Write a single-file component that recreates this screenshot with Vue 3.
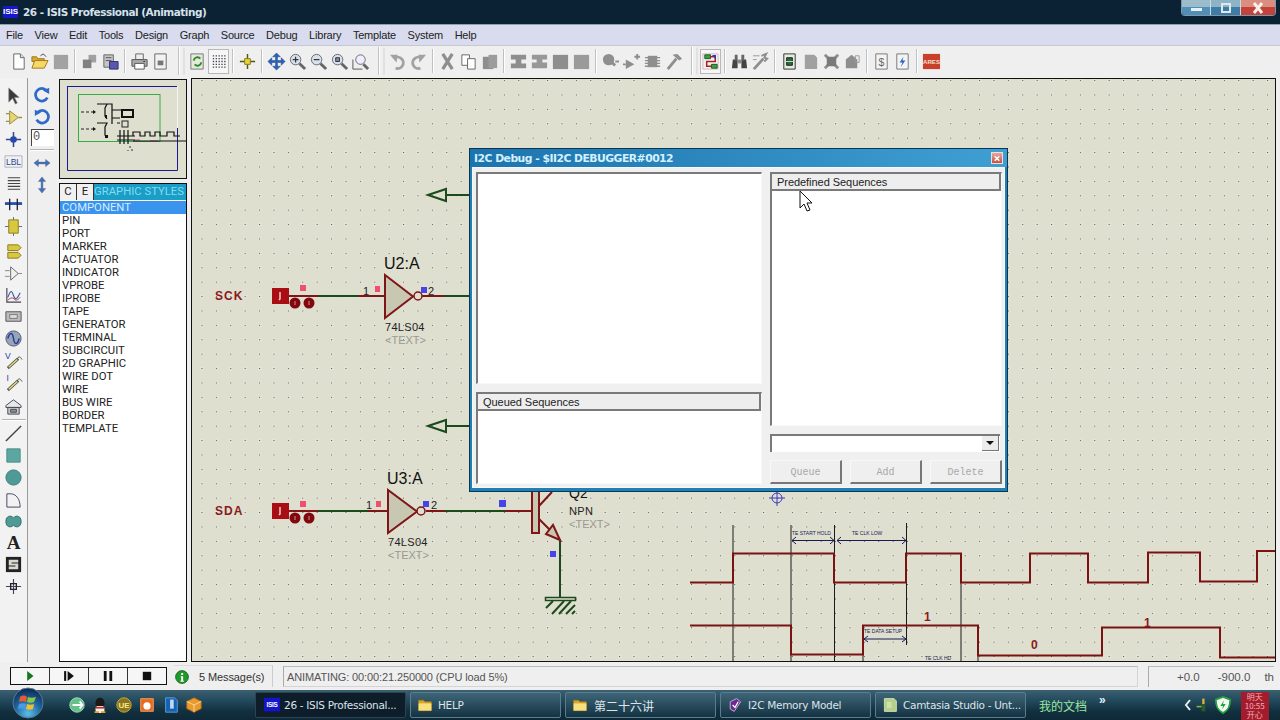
<script setup>
import { h } from 'vue'

const G = '#8e8e8e'
const circle = (cx, cy, r) => `M${cx - r} ${cy}a${r} ${r} 0 1 0 ${2 * r} 0a${r} ${r} 0 1 0 ${-2 * r} 0`
let dots = ''
for (let y = 4; y < 18; y += 3) for (let x = 4; x < 18; x += 3) dots += `M${x} ${y}h1.4`

const lens = (extra) => [
  ['M12 12l6 6', 'none', '#666', 3],
  [circle(8, 8, 5.5), '#d8e0e8', '#667'],
  ...extra
]

const icons = {
  new: [['M5 2h7l4 4v12H5z', '#fff', '#666'], ['M12 2v4h4', '#ddd', '#666']],
  open: [['M11 4l3-2 3 3', 'none', '#446'], ['M2 5h5l1 2h7v3H2z', '#d8a828', '#a07818'], ['M2 17l3-8h14l-4 8z', '#f6d868', '#a07818']],
  save: [['M3 3h15v15H3z', '#a2a2a2']],
  imp: [['M9 3h8v8H9z', '#a0a0a0'], ['M3 8h9v9H3z', '#808080']],
  exp: [['M3 3h10v13H3z', '#c4c4c4', '#666'], ['M5 6h6M5 9h6', 'none', '#555'], ['M9 10h9v8H9z', '#5858b0', '#336']],
  print: [['M6 2h8v6H6z', '#eee', '#666'], ['M2 8h16v7H2z', '#aaa', '#555'], ['M5 12h10v6H5z', '#fff', '#555'], ['M14 10h2', 'none', '#333']],
  prev: [['M4 2h12v16H4z', '#f2f2f2', '#666'], ['M7 9h6v5H7z', '#777']],
  sync: [['M3 2h13v16H3z', '#e4ead8', '#778'], ['M6 9a4 4 0 0 1 7-2', 'none', '#2a8a2a', 2], ['M14 11a4 4 0 0 1-7 2', 'none', '#2a8a2a', 2]],
  grid: [[dots, 'none', '#445', 1.4]],
  origin: [['M10 2v16M2 10h16', 'none', '#4a5a10', 1.5], ['M7 7h6v6H7z', '#e8d040', '#8a7a10']],
  pan: [['M10 1l4 4h-3v4h4V6l4 4-4 4v-3h-4v4h3l-4 4-4-4h3v-4H5v3l-4-4 4-4v3h4V5H6z', '#2a62c0', '#1a3a80', 0.5]],
  zin: lens([['M5 8h6M8 5v6', 'none', '#334', 1.3]]),
  zout: lens([['M5 8h6', 'none', '#334', 1.3]]),
  zall: lens([['M6 6h4v4H6z', '#889', '#334']]),
  zarea: [['M2 8v10h10', 'none', '#555', 1], ['M13 13l5 5', 'none', '#666', 3], [circle(10, 8, 5), '#eef', '#667']],
  undo: [['M6 7a6 6 0 1 1 2 10', 'none', '#a2a2a2', 3], ['M2 3l8 0-1 8z', '#a2a2a2']],
  redo: [['M14 7a6 6 0 1 0-2 10', 'none', '#a2a2a2', 3], ['M18 3l-8 0 1 8z', '#a2a2a2']],
  cut: [['M5 2l10 16M15 2L5 18', 'none', G, 3.4]],
  copy: [['M3 3h8v11H3z', '#fff', '#666'], ['M9 7h8v11H9z', '#fff', '#666']],
  paste: [['M3 5h11v13H3z', G], ['M9 3h9v14H9z', '#9c9c9c']],
  bcopy: [['M2 3h16v5h-5v4h5v5H2v-5h5V8H2z', G]],
  bmove: [['M2 3h16v5h-5v3h5v6H2v-6h5V8H2z', '#989898']],
  brot: [['M2 3h16v15H2z', G]],
  bdel: [['M2 3h16v15H2z', '#9a9a9a']],
  pick: [['M11 11l4 3', 'none', G, 3], [circle(8, 8, 6), G], ['M15 10h4', 'none', G, 2]],
  mk: [['M4 8l9 5-9 5z', G], ['M13 5h6M16 2v6M1 13h3', 'none', G, 2]],
  chip: [['M5 4h10v12H5z', G], ['M2 6h16M2 9h16M2 12h16M2 15h16', 'none', G, 1.4]],
  hammer: [['M4 18L13 7', 'none', G, 3], ['M9 3l5-1 5 5-3 2z', G]],
  dsn: [['M2 2h16v16H2z', '#f0f0f0', '#d8b8b8'], ['M4 3h6v4H4zM11 13h6v4h-6z', '#38a048', '#1a5a20'], ['M10 5h5v5H6v5h5', 'none', '#b02020', 1.6], ['M12 4h3v3', 'none', '#2040c0', 1.6]],
  find: [['M3 8h5v9H2zM12 8h5l1 9h-6z', '#444'], ['M5 3h3v6H5zM12 3h3v6h-3z', '#666'], ['M8 8h4v4H8z', '#888']],
  wrench: [['M3 18L13 7', 'none', G, 3], ['M11 4l5-2-2 4 3 1-3 3', 'none', G, 2], ['M2 4h7M2 8h4', 'none', '#999', 1]],
  net: [['M4 2h12v16H4z', '#e8ecd8', '#333'], ['M7 6h6v8H7z', '#2a6a40', '#123'], ['M5 10h10', 'none', '#d0e0c0', 1]],
  bom: [['M4 3h10l3 3v12H4z', '#a0a0a0']],
  rule: [['M3 3l14 14M17 3L3 17', 'none', G, 3], ['M5 5h10v10H5z', '#7a7a7a']],
  tree: [['M3 8l6-5 6 5v9H3z', G], ['M13 4h4v7h-4z', 'none', '#999', 1]],
  dollar: [['M4 2h12v16H4z', '#f4f4f4', '#777'], { t: '$', x: 10, y: 15, s: 11, f: '#666' }],
  flash: [['M4 2h12v16H4z', '#f4f4f4', '#777'], ['M11 5l-4 6h3l-2 5 5-7h-3z', '#2a60c8']],
  ares: [['M1 2h18v16H1z', '#c8402c'], { t: 'ARES', x: 10, y: 13, s: 6.4, f: '#f4e0d0', w: 'bold' }],

  arrow: [['M5 2v15l4-4 3 6 2-1-3-6h5z', '#3a3a3a', '#888', 0.6]],
  comp: [['M2 6h4M2 14h4M15 10h4', 'none', '#a09040', 1.4], ['M6 3v14l9-7z', '#e6d670', '#998840']],
  junc: [['M10 2v16M2 10h16', 'none', '#334a8a', 1.6], [circle(10, 10, 3.5), '#2a4aaa']],
  lbl: [['M1 4h18v12H1z', '#f0f0f0', '#88a', 0.6], { t: 'LBL', x: 10, y: 13.5, s: 9, f: '#264a90' }],
  script: [['M4 4h13M4 7h13M4 10h13M4 13h13M4 16h13', 'none', '#444', 1.2]],
  bus: [['M1 9h18', 'none', '#2a52b0', 3], ['M6 4v12M14 4v12', 'none', '#223', 1.4]],
  sub: [['M1 10h18M10 0v4M10 16v4', 'none', '#666', 1], ['M5 3h10v14H5z', '#d8c840', '#8a7a20']],
  term: [['M4 3h11l3 3-3 3H4z', '#d8c840', '#8a7a20'], ['M4 11h11l3 3-3 3H4z', '#d8c840', '#8a7a20']],
  pin: [['M7 3v14l8-7z', '#f0f0f0', '#666'], ['M1 7h5M1 13h5M15 10h4', 'none', '#888', 1]],
  graph: [['M3 2v15h15', 'none', '#445', 1.2], ['M4 12c3-8 4-8 6-2s4 3 7-3', 'none', '#3a5aa0', 1.2], ['M4 15c3-3 5-3 7-1s4 0 6-2', 'none', '#b03030', 1]],
  tape: [['M2 5h16v10H2z', '#bcbcbc', '#555'], ['M6 8h8v4H6z', '#ddd', '#777']],
  gen: [[circle(10, 10, 8), '#9aa4b8', '#556'], ['M4 10c2-7 5-7 6 0s4 7 6 0', 'none', '#2240a0', 1.6]],
  vprobe: [['M4 18L15 8', 'none', '#555', 3], ['M5 17L14 9', 'none', '#e6e070', 1.4], ['M14 8c2-3 3-2 5 1', 'none', '#444', 1], { t: 'V', x: 4, y: 8, s: 9, f: '#2a3a9a' }],
  iprobe: [['M4 18L15 8', 'none', '#555', 3], ['M5 17L14 9', 'none', '#e6e070', 1.4], ['M14 8c2-3 3-2 5 1', 'none', '#444', 1], { t: 'I', x: 4, y: 8, s: 9, f: '#2a3a9a' }],
  inst: [['M2 9l8-6 8 6v2H2z', '#e8e8e8', '#445'], ['M4 11h12v7H4z', '#c8c8c8', '#445'], ['M7 13h6v3H7z', '#8a9a8a', '#445']],
  line: [['M2 18L18 2', 'none', '#444', 1.5]],
  rect: [['M3 3h14v14H3z', '#5ba8a2', '#4a8a88']],
  circ: [[circle(10, 10, 8), '#4f9a94', '#3a7a78']],
  arc: [['M3 18V4h4c6 0 10 6 10 14z', 'none', '#446', 1]],
  blob: [['M2 10c0-6 5-7 8-4 3-3 8-2 8 4s-5 7-8 4c-3 3-8 2-8-4z', '#4f9a94', '#2a6a68']],
  atext: [{ t: 'A', x: 10, y: 17, s: 20, f: '#222', w: 'bold', ff: 'Liberation Serif' }],
  sym: [['M2 2h16v16H2z', '#222'], ['M5 5h10v3H8v1h7v6H5v-3h7v-1H5z', '#d8d8d0']],
  mark: [['M10 2v16M2 10h16', 'none', '#445', 1.2], ['M7 7h6v6H7z', 'none', '#223', 1.4]],

  cw: [['M15 5a7 7 0 1 0 1 8', 'none', '#2f6ac8', 3], ['M11 5l7-3v7z', '#2f6ac8']],
  ccw: [['M5 5a7 7 0 1 1-1 8', 'none', '#2f6ac8', 3], ['M9 5L2 2v7z', '#2f6ac8']],
  fliph: [['M1 10l5-4v3h8V6l5 4-5 4v-3H6v3z', '#3a70c8', '#666', 0.5]],
  flipv: [['M10 1l4 5h-3v8h3l-4 5-4-5h3V6H6z', '#3a70c8', '#666', 0.5]],

  info: [[circle(10, 10, 8), '#1f9a2a', '#0c5a14'], ['M9 5h2.4v2.4H9zM8.4 9h3v5.6h1V16H8v-1.4h1V10.4h-.6z', '#fff']],
  play: [['M6 3l9 7-9 7z', '#14761e']],
  step: [['M3 3h3v14H3z', '#111'], ['M8 3l9 7-9 7z', '#111']],
  pause: [['M4 3h4v14H4zM12 3h4v14h-4z', '#111']],
  stop: [['M4 4h12v12H4z', '#111']],

  ie: [[circle(10, 10, 8), '#66c08a', '#a8e0c0'], ['M5 10h10M13 6l3 4-3 4', 'none', '#fff', 2]],
  qq: [['M5 15c0-3 2-5 5-5s5 2 5 5-2 4-5 4-5-1-5-4z', '#f4f4f4'], ['M5 8c0-8 10-8 10 0 0 2-1 3-1 3H6s-1-1-1-3z', '#1a1a1a'], ['M5 12h10v2H5z', '#d02a20'], ['M4 18h5M11 18h5', 'none', '#e8a020', 2]],
  ue: [[circle(10, 10, 8), '#8a7420', '#c8b040'], { t: 'UE', x: 10, y: 13.5, s: 9, f: '#f8e880', w: 'bold' }],
  fox: [['M3 3h14v14H3z', '#e86a20', '#f8a060'], [circle(10, 11, 4), '#fff']],
  box: [['M4 2h10l3 3v13H4z', '#1a60b0', '#5aa0e0'], ['M9 4h4v10H9z', '#bcdcf4']],
  cube: [['M10 2l8 4v8l-8 4-8-4V6z', '#e89a30', '#b06a10'], ['M2 6l8 4 8-4M10 10v8', 'none', '#fbe0a0', 1]],
  isis: [['M0 1h20v17H0z', '#1414c8'], { t: 'ISIS', x: 10, y: 13, s: 8, f: '#fff', w: 'bold' }],
  folder: [['M2 4h6l2 2h8v11H2z', '#d8a828', '#a07818'], ['M2 8h16v9H2z', '#f8e080']],
  book: [['M4 6l8-4 5 4-8 12-5-3z', '#6a2a90', '#d8c8e0'], ['M7 10l3 3 4-7', 'none', '#fff', 1.5]],
  cam: [['M3 2h12l3 3v13H3z', '#b4d088', '#dce8c0'], ['M6 6h6v8H6z', '#d0e0a8']],
  plug: [['M9 2h3v7H9z', '#d8b040'], ['M8 9h5v9H8z', '#2a5a2a'], ['M2 12h6', 'none', '#88b040', 2]],
  shield: [['M10 1l8 3c0 8-2 12-8 15C4 16 2 12 2 4z', '#f0f8f0', '#28a040', 2], ['M11 5l-4 6h3l-1 4 4-6h-3z', '#20a040']]
}

const Icon = (props) =>
  h('svg', { width: props.size || 20, height: props.size || 20, viewBox: '0 0 20 20', style: 'display:block' },
    icons[props.name].map((p) =>
      p.t
        ? h('text', { x: p.x, y: p.y, 'font-size': p.s, fill: p.f, 'font-family': p.ff || 'Liberation Sans', 'font-weight': p.w || 'normal', 'text-anchor': 'middle' }, p.t)
        : h('path', { d: p[0], fill: p[1] || 'none', stroke: p[2] || 'none', 'stroke-width': p[3] || 1 })
    ))
Icon.props = ['name', 'size']

const menus = ['File', 'View', 'Edit', 'Tools', 'Design', 'Graph', 'Source', 'Debug', 'Library', 'Template', 'System', 'Help']

const toolGroups = [
  { icons: ['new', 'open', 'save'] },
  { icons: ['imp', 'exp'] },
  { icons: ['print', 'prev'] },
  { wide: true, icons: ['sync', 'grid'] },
  { icons: ['origin'] },
  { icons: ['pan', 'zin', 'zout', 'zall', 'zarea'] },
  { wide: true, icons: ['undo', 'redo'] },
  { icons: ['cut', 'copy', 'paste'] },
  { icons: ['bcopy', 'bmove', 'brot', 'bdel'] },
  { icons: ['pick', 'mk', 'chip', 'hammer'] },
  { wide: true, icons: ['dsn'] },
  { icons: ['find', 'wrench'] },
  { icons: ['net', 'bom', 'rule', 'tree'] },
  { icons: ['dollar', 'flash'] },
  { icons: ['ares'] }
]
const pressed = ['grid', 'dsn']

const modeA = ['arrow', 'comp', 'junc', 'lbl', 'script', 'bus', 'sub', 'term', 'pin', 'graph', 'tape', 'gen', 'vprobe', 'iprobe', 'inst']
const modeB = ['line', 'rect', 'circ', 'arc', 'blob', 'atext', 'sym', 'mark']

const styles = ['COMPONENT', 'PIN', 'PORT', 'MARKER', 'ACTUATOR', 'INDICATOR', 'VPROBE', 'IPROBE', 'TAPE', 'GENERATOR', 'TERMINAL', 'SUBCIRCUIT', '2D GRAPHIC', 'WIRE DOT', 'WIRE', 'BUS WIRE', 'BORDER', 'TEMPLATE']

const dialogButtons = ['Queue', 'Add', 'Delete']
const playButtons = ['play', 'step', 'pause', 'stop']
const quick = ['ie', 'qq', 'ue', 'fox', 'box', 'cube']
const tasks = [
  { icon: 'isis', label: '26 - ISIS Professional...', active: true },
  { icon: 'folder', label: 'HELP' },
  { icon: 'folder', label: '第二十六讲', cjk: true },
  { icon: 'book', label: 'I2C Memory Model' },
  { icon: 'cam', label: 'Camtasia Studio - Unt...' }
]

const upper = '690,582.5 733,582.5 733,553.5 834,553.5 834,582.5 906,582.5 906,553.5 961,553.5 961,582.5 1030,582.5 1030,553.5 1088,553.5 1088,582.5 1148,582.5 1148,552.5 1200,552.5 1200,581.5 1257,581.5 1257,551 1276,551'
const lower = '690,625.5 791,625.5 791,654.5 863,654.5 863,625.5 978,625.5 978,655.5 1102,655.5 1102,627.5 1220,627.5 1220,657.5 1276,657.5'
const verticals = [
  [733, 525, 662], [791, 525, 662], [834.5, 525, 662], [906.5, 523, 645],
  [961, 582, 662], [863, 654, 662], [978, 654, 662]
]
const generators = [
  { x: 272, y: 288, pink: 300, pinkY: 285 },
  { x: 272, y: 503, pink: 300, pinkY: 501 }
]
</script>

<template>
  <div class="screen">
    <header class="titlebar">
      <div class="app-ico">ISIS</div>
      <span class="title">26 - ISIS Professional (Animating)</span>
      <div class="caption">
        <span class="cap min"><i class="dash"></i></span>
        <span class="cap max"><i class="sq"></i></span>
        <span class="cap close">
          <svg width="14" height="12" viewBox="0 0 14 12"><path d="M3 1l8 10M11 1L3 11" stroke="#f4f0e8" stroke-width="3" fill="none" /></svg>
        </span>
      </div>
    </header>

    <nav class="menubar">
      <span v-for="m in menus" :key="m" class="menu">{{ m }}</span>
    </nav>

    <div class="toolbar">
      <template v-for="(g, i) in toolGroups" :key="i">
        <span v-if="i" class="sep" :class="{ wide: g.wide }"></span>
        <span v-for="n in g.icons" :key="n" class="tbtn" :class="{ on: pressed.includes(n) }">
          <Icon :name="n" :size="19" />
        </span>
      </template>
    </div>

    <main class="main">
      <aside class="modes">
        <span v-for="n in modeA" :key="n" class="mode"><Icon :name="n" :size="19" /></span>
        <span class="hr"></span>
        <span v-for="n in modeB" :key="n" class="mode"><Icon :name="n" :size="19" /></span>
      </aside>

      <aside class="rot">
        <span class="mode"><Icon name="cw" :size="18" /></span>
        <span class="mode"><Icon name="ccw" :size="18" /></span>
        <div class="angle">0</div>
        <span class="hr"></span>
        <span class="mode"><Icon name="fliph" :size="18" /></span>
        <span class="mode"><Icon name="flipv" :size="18" /></span>
      </aside>

      <section class="panel">
        <div class="overview">
          <svg width="126" height="98" viewBox="60 80 126 98">
            <path d="M67 86.500H177" stroke="#1a1a90" fill="none" />
            <path d="M67.500 86V170.500H177.500V128" stroke="#1a1a90" fill="none" />
            <path d="M177.500 86V128" stroke="#f4f4f0" fill="none" />
            <rect x="78.500" y="94.500" width="81.500" height="47" fill="none" stroke="#30b040" />
            <path d="M81 112h3m2 0h3m2 0h3M81 129h3m2 0h3m2 0h3" stroke="#222" fill="none" />
            <path d="M93 110l3 2-3 2zM93 127l3 2-3 2z" fill="#111" />
            <path d="M97 104h10l-2 4v8l2 3M97 123h10l-2 4v8l2 3M107 104h5v20M112 110h10M112 118h8M117 123h3" stroke="#111" stroke-width="1.200" fill="none" />
            <rect x="122" y="110" width="11" height="7" fill="none" stroke="#111" stroke-width="2" />
            <rect x="122" y="121" width="6" height="6" fill="none" stroke="#222" />
            <rect x="105" y="115" width="2" height="3" fill="#111" /><rect x="105" y="135" width="3" height="3" fill="#111" />
            <path d="M120 130v14M124 130v14M128 130v14M117 136h18M117 140h18" stroke="#111" fill="none" stroke-width="1.200" />
            <path d="M132 140h8M150 141h8" stroke="#d040a0" fill="none" />
            <path d="M133 136v-4h7v4h5v-4h5v4h5v-4h5v4h7v-4h7v4h6" stroke="#111" fill="none" stroke-width="1.200" />
            <path d="M133 141h53" stroke="#111" fill="none" stroke-width="1.200" />
            <path d="M130 146v2M132 149v2M128 150v1" stroke="#333" fill="none" />
          </svg>
        </div>
        <div class="tabs">
          <span class="tab">C</span><span class="tab">E</span>
          <span class="tab-title">GRAPHIC STYLES</span>
        </div>
        <ul class="stylelist">
          <li v-for="(s, i) in styles" :key="s" :class="{ sel: i === 0 }">{{ s }}</li>
        </ul>
      </section>

      <section class="canvas">
        <svg class="sheet" viewBox="192 79 1083 582" width="1083" height="582">
          <defs>
            <pattern id="dots" x="200.500" y="93.500" width="14.400" height="14.400" patternUnits="userSpaceOnUse">
              <rect width="3" height="3" x="0" y="0" fill="#e6e6da" />
              <rect x="1" y="1" width="1" height="1" fill="#4a4a44" />
            </pattern>
          </defs>
          <rect x="192" y="79" width="1083" height="582" fill="#dfdfd0" />
          <rect x="192" y="79" width="1083" height="582" fill="url(#dots)" />

          <!-- bus terminals behind the dialog -->
          <g fill="none" stroke="#1c4a1c" stroke-width="2">
            <path d="M428 195l18-6v12zM446 195h24M428 426l18-6v12zM446 426h24" />
          </g>

          <!-- SCK channel -->
          <text x="215" y="300" class="netname">SCK</text>
          <text x="215" y="515" class="netname">SDA</text>
          <g v-for="g in generators" :key="g.y">
            <rect :x="g.x" :y="g.y" width="17" height="16" fill="#a80e14" />
            <path :d="`M${g.x + 8} ${g.y + 4}v7l-1 1`" stroke="#f0d0d0" fill="none" stroke-width="1.500" />
            <circle :cx="g.x + 23" :cy="g.y + 15" r="5.500" fill="#80080e" />
            <circle :cx="g.x + 37" :cy="g.y + 15" r="5.500" fill="#80080e" />
            <path :d="`M${g.x + 23} ${g.y + 13}v4M${g.x + 37} ${g.y + 13}v4`" stroke="#d09090" />
            <rect :x="g.pink" :y="g.pinkY" width="6" height="6" fill="#f0506e" />
          </g>

          <path d="M289 296h29M358 296h27M422 296h22M289 511h29M368 511h20M426 511h19M505 511h27" stroke="#7e1618" stroke-width="2" fill="none" />
          <path d="M318 296h40M444 296h26M318 511h50M445 511h60M560 541v56" stroke="#1c4a1c" stroke-width="2" fill="none" />

          <!-- U2:A -->
          <path d="M385 275v43l28-21.500z" fill="#c8c8b2" stroke="#7e1618" stroke-width="2" />
          <circle cx="418" cy="296" r="4" fill="#dfdfd0" stroke="#7e1618" stroke-width="1.500" />
          <rect x="375" y="286" width="5" height="6" fill="#f0506e" />
          <rect x="421" y="287" width="6" height="6" fill="#4646e8" />
          <text x="363" y="295" class="pin">1</text>
          <text x="428" y="295" class="pin">2</text>
          <text x="384" y="269" class="ref">U2:A</text>
          <text x="385" y="331" class="val">74LS04</text>
          <text x="385" y="344" class="ghost">&lt;TEXT&gt;</text>

          <!-- U3:A -->
          <path d="M388 490v43l29-21.500z" fill="#c8c8b2" stroke="#7e1618" stroke-width="2" />
          <circle cx="421" cy="511" r="4" fill="#dfdfd0" stroke="#7e1618" stroke-width="1.500" />
          <rect x="376" y="501" width="5" height="6" fill="#f0506e" />
          <rect x="423" y="501" width="6" height="6" fill="#4646e8" />
          <text x="366" y="509" class="pin">1</text>
          <text x="431" y="509" class="pin">2</text>
          <text x="387" y="484" class="ref">U3:A</text>
          <text x="388" y="546" class="val">74LS04</text>
          <text x="388" y="559" class="ghost">&lt;TEXT&gt;</text>

          <!-- Q2 -->
          <rect x="499" y="500" width="7" height="7" fill="#4646e8" />
          <rect x="532" y="488" width="7" height="45" fill="#c8c8b2" stroke="#7e1618" stroke-width="2" />
          <path d="M539 506l13-14M539 519l21 21" stroke="#7e1618" stroke-width="2" fill="none" />
          <path d="M546 534l7-9 7 15z" fill="#c8c8b2" stroke="#7e1618" stroke-width="2" />
          <rect x="550" y="551" width="6" height="6" fill="#4646e8" />
          <text x="569" y="498" class="ref q">Q2</text>
          <text x="569" y="515" class="val">NPN</text>
          <text x="569" y="528" class="ghost">&lt;TEXT&gt;</text>

          <!-- ground -->
          <path d="M545.500 597.500h30v3h-30z" fill="#dfdfd0" stroke="#1c4a1c" stroke-width="1.500" />
          <path d="M546 608l7-7M552 614l12-13M559 614l12-13M566 614l9-9M572 614l3-3" stroke="#1c4a1c" stroke-width="2" fill="none" />

          <!-- probe marker -->
          <g fill="none" stroke="#3a3ab8">
            <circle cx="777" cy="498" r="5" />
            <path d="M777 490v16M769 498h16" />
          </g>

          <!-- timing diagram -->
          <g stroke="#1a1a1a" fill="none">
            <path v-for="v in verticals" :key="v[0]" :d="`M${v[0]} ${v[1]}V${v[2]}`" />
          </g>
          <polyline :points="upper" class="wave" />
          <polyline :points="lower" class="wave" />
          <g stroke="#1a1a50" fill="none">
            <path d="M792 540.500h42M796 537l-4 3.500 4 3.500M830 537l4 3.500-4 3.500" />
            <path d="M837 540.500h69M841 537l-4 3.500 4 3.500M902 537l4 3.500-4 3.500" />
            <path d="M864 639h42M868 636l-4 3 4 3M902 636l4 3-4 3" />
          </g>
          <text x="792" y="535" class="tiny">TE START HOLD</text>
          <text x="852" y="535" class="tiny">TE CLK LOW</text>
          <text x="864" y="633" class="tiny">TE DATA SETUP</text>
          <text x="925" y="660" class="tiny">TE CLK HD</text>
          <text x="924" y="621" class="bit">1</text>
          <text x="1031" y="649" class="bit">0</text>
          <text x="1144" y="627" class="bit">1</text>
        </svg>

        <div class="dialog">
          <div class="dlg-title">
            <span>I2C Debug - $II2C DEBUGGER#0012</span>
            <span class="dlg-close">
              <svg width="11" height="11" viewBox="0 0 11 11"><path d="M3 3l5 5M8 3L3 8" stroke="#fff" stroke-width="1.600" /></svg>
            </span>
          </div>
          <div class="dlg-body">
            <div class="col left">
              <div class="well log"></div>
              <div class="well queued"><div class="well-head">Queued Sequences</div></div>
            </div>
            <div class="col right">
              <div class="well predefined"><div class="well-head">Predefined Sequences</div></div>
              <div class="combo">
                <span class="combo-btn"><i></i></span>
              </div>
              <div class="btnrow">
                <button v-for="b in dialogButtons" :key="b" class="dbtn" disabled>{{ b }}</button>
              </div>
            </div>
          </div>
          <svg class="cursor" width="14" height="24" viewBox="0 0 14 24">
            <path d="M1 1v17l4-4 3 7 3-1-3-7h5z" fill="#fff" stroke="#111" />
          </svg>
        </div>
      </section>
    </main>

    <footer class="status">
      <div class="player">
        <span v-for="p in playButtons" :key="p" class="pbtn"><Icon :name="p" :size="14" /></span>
      </div>
      <div class="messages"><Icon name="info" :size="16" /><span>5 Message(s)</span></div>
      <div class="state">ANIMATING: 00:00:21.250000 (CPU load 5%)</div>
      <div class="coords">
        <span class="cx">+0.0</span><span class="cy">-900.0</span><span class="cu">th</span>
      </div>
    </footer>

    <div class="taskbar">
      <svg class="orb" width="32" height="32" viewBox="0 0 32 32">
        <defs>
          <radialGradient id="orbfill" cx="50%" cy="85%" r="80%">
            <stop offset="0" stop-color="#5ac0e8" />
            <stop offset="0.6" stop-color="#1c5e98" />
            <stop offset="1" stop-color="#0c2e58" />
          </radialGradient>
        </defs>
        <circle cx="16" cy="16" r="15" fill="url(#orbfill)" stroke="#5a7a90" />
        <path d="M8 10c2-2 5-2 7 0l-1 5c-2-1-5-1-7 0z" fill="#e85a30" />
        <path d="M16 10c2 1 5 1 8 0l-2 5c-2 1-5 1-7 0z" fill="#8ac840" />
        <path d="M7 17c2-1 5-1 7 0l-1 5c-2-1-5-1-7 0z" fill="#4a9ae8" />
        <path d="M15 17c2 1 5 1 7 0l-1 5c-2 1-5 1-7 0z" fill="#f0c030" />
      </svg>
      <div class="quick">
        <span v-for="q in quick" :key="q" class="qi"><Icon :name="q" :size="18" /></span>
      </div>
      <div class="tasks">
        <div v-for="t in tasks" :key="t.label" class="task" :class="{ active: t.active, cjk: t.cjk }">
          <Icon :name="t.icon" :size="16" /><span>{{ t.label }}</span>
        </div>
      </div>
      <span class="docs">我的文档</span>
      <span class="more">»</span>
      <div class="tray">
        <svg width="8" height="12" viewBox="0 0 8 12"><path d="M6 1L2 6l4 5" stroke="#e8f0f4" stroke-width="2" fill="none" /></svg>
        <Icon name="plug" :size="16" />
        <Icon name="shield" :size="18" />
      </div>
      <div class="clock"><span>明天</span><span>10:55</span><span>开心</span></div>
    </div>
  </div>
</template>

<style>
html, body { margin: 0; background: #efefef; overflow: hidden; }
</style>

<style scoped>
* { box-sizing: border-box; }
.screen {
  width: 1280px; height: 720px; display: flex; flex-direction: column;
  font-family: "Liberation Sans", Arial, sans-serif; background: #efefef; color: #222; overflow: hidden;
}

.titlebar {
  height: 25px; flex: none; background: #0b2134; border-bottom: 1px solid #8fa0ae;
  display: flex; align-items: flex-start; position: relative;
}
.app-ico {
  margin: 6px 0 0 3px; width: 15px; height: 12px; background: #1616cc; color: #fff;
  font: bold 8px/12px "Liberation Sans", sans-serif; text-align: center;
}
.title {
  margin: 5px 0 0 5px; color: #d6e2ea; font: bold 10.500px/15px "DejaVu Sans", sans-serif; letter-spacing: -0.5px;
}
.caption {
  margin-left: auto; margin-right: 4px; display: flex; height: 16px; width: 95px;
  border: 1px solid #7f97a8; border-top: 0; border-radius: 0 0 4px 4px; overflow: hidden;
}
.cap { display: flex; align-items: center; justify-content: center; }
.min { width: 29px; background: linear-gradient(#9dbccb 0 50%, #4f8fb8 50%); border-right: 1px solid #c8dbe4; }
.max { width: 30px; background: linear-gradient(#8fb3c6 0 50%, #3c7ca6 50%); border-right: 1px solid #c8dbe4; }
.close { flex: 1; background: linear-gradient(#d98e80 0 50%, #c4423a 50%); }
.dash { width: 11px; height: 3px; background: #e8eef2; margin-top: 4px; display: block; }
.sq { width: 10px; height: 10px; border: 2px solid #e0e8ec; display: block; }

.menubar {
  height: 21px; flex: none; background: #d8dcee; border-bottom: 1px solid #c8c8d0;
  display: flex; align-items: center; padding-left: 6px; gap: 11.600px;
  font-size: 11px; letter-spacing: -0.2px; color: #222;
}

.toolbar {
  height: 32px; flex: none; display: flex; align-items: center; padding: 0 0 2px 8px; background: #efefef;
}
.tbtn { width: 21px; height: 25px; display: flex; align-items: center; justify-content: center; flex: none; }
.tbtn.on { background: #f6f6f6; outline: 1px solid #b8b8b8; outline-offset: -1px; }
.sep { width: 2px; height: 24px; margin: 0 3px; flex: none; border-left: 1px solid #c0c0c0; border-right: 1px solid #fff; }
.sep.wide { margin: 0 7px; height: 28px; box-shadow: 5px 0 0 -0.5px #d4d4d4; }

.main { height: 584px; flex: none; display: flex; }
.modes {
  width: 28px; flex: none; border-right: 1px solid #9a9a9a; background: #f2f2f2;
  display: flex; flex-direction: column; align-items: center; padding-top: 7px;
}
.mode { height: 21.800px; flex: none; display: flex; align-items: center; justify-content: center; }
.modes .mode:nth-child(8) { margin-top: 3px; }
.modes .mode:nth-child(15) { margin-top: 2px; }
.hr { width: 24px; height: 2px; flex: none; margin: 2px 0; border-top: 1px solid #b4b4b4; border-bottom: 1px solid #fff; }
.rot {
  width: 28px; flex: none; display: flex; flex-direction: column; align-items: center; padding: 6px 0 0 0; background: #efefef;
}
.angle {
  width: 23px; height: 17px; margin: 1px 0 1px 1px; background: #fff; border-top: 1px solid #444; border-left: 1px solid #444;
  font: 12px/15px "Liberation Mono", monospace; padding-left: 1px; color: #555;
}
.rot .hr { margin: 2px 0 2px; }

.panel { width: 128px; margin: 0 4px 0 3px; flex: none; display: flex; flex-direction: column; }
.overview { height: 100px; flex: none; margin-top: 1px; background: #dfdfd0; border: 1px solid #111; overflow: hidden; }
.overview svg { display: block; }
.tabs { height: 17px; margin-top: 4px; flex: none; display: flex; background: #1b9dc6; border-left: 1px solid #111; border-top: 1px solid #111; border-right: 1px solid #111; }
.tab {
  width: 17px; background: #f0f0f0; border-right: 1px solid #333; text-align: center;
  font: 11.300px/16px Roboto, sans-serif;
}
.tab-title { flex: 1; overflow: hidden; white-space: nowrap; color: #7fdcf2; font: 11.300px/16px Roboto, sans-serif; }
.stylelist {
  flex: 1; margin: 0; padding: 1px 0 0; list-style: none; background: #fff; border: 1px solid #111; border-top: 0;
}
.stylelist li { height: 13px; padding-left: 2px; font: 11.300px/13px Roboto, sans-serif; color: #222; white-space: nowrap; }
.stylelist li.sel { background: #3a94ee; color: #d8ecff; }

.canvas { flex: 1; margin-right: 4px; border: 1px solid #111; position: relative; overflow: hidden; background: #dfdfd0; }
.sheet { display: block; }
.netname { font: bold 12px "Liberation Sans", sans-serif; fill: #8a1a20; letter-spacing: 1px; }
.pin { font: 11px "Liberation Sans", sans-serif; fill: #222; }
.ref { font: 16px "Liberation Sans", sans-serif; fill: #111; }
.ref.q { font-size: 14px; }
.val { font: 11px "Liberation Sans", sans-serif; fill: #222; letter-spacing: 0.3px; }
.ghost { font: 11px "Liberation Sans", sans-serif; fill: #9a9a92; }
.wave { fill: none; stroke: #7a1212; stroke-width: 2; }
.tiny { font: 5px "Liberation Sans", sans-serif; fill: #1a1a50; }
.bit { font: bold 12px "Liberation Sans", sans-serif; fill: #8a1a1a; }

.dialog {
  position: absolute; left: 277px; top: 69px; width: 539px; height: 344px;
  background: #1f80b8; border: 1px solid #0d3550; padding: 0 2px 3px; display: flex; flex-direction: column;
}
.dlg-title {
  height: 18px; flex: none; margin: 0 -2px; padding: 0 4px 0 4px; display: flex; align-items: center; justify-content: space-between;
  background: linear-gradient(90deg, #1c74ae, #3f9fd2); color: #d4f0fc; font: bold 10.800px "DejaVu Sans", sans-serif; letter-spacing: -0.52px;
}
.dlg-close {
  width: 12px; height: 12px; background: linear-gradient(#e8a8a0, #c85040); border: 1px solid #e8e0e0; display: flex; align-items: center; justify-content: center;
}
.dlg-body {
  flex: 1; min-height: 0; background: #f0f0f0; border: 1px solid #f8f8f8; padding: 4px 2px 3px 3px; display: flex; gap: 8px;
}
.col { display: flex; flex-direction: column; gap: 8px; }
.col.left { width: 286px; }
.col.right { width: 232px; }
.well { background: #fff; border-top: 2px solid #7a7a7a; border-left: 2px solid #7a7a7a; border-right: 1px solid #f8f8f8; border-bottom: 1px solid #f8f8f8; }
.log { height: 212px; }
.queued { height: 92px; }
.predefined { height: 254px; }
.well-head {
  height: 17px; background: #eeeeee; border-bottom: 2px solid #7a7a7a; border-right: 2px solid #7a7a7a;
  padding: 1px 0 0 5px; font-size: 11px; line-height: 14px; letter-spacing: -0.05px; color: #222;
}
.combo {
  height: 18px; background: #fff; border-top: 2px solid #7a7a7a; border-left: 2px solid #7a7a7a; margin-right: 2px;
  display: flex; justify-content: flex-end; position: relative;
}
.combo-btn { width: 17px; height: 15px; margin-right: 1px; background: #ececec; border-right: 1px solid #777; border-bottom: 1px solid #777; display: flex; align-items: center; justify-content: center; }
.combo-btn i { width: 0; height: 0; border: 4px solid transparent; border-top: 4px solid #111; border-bottom: 0; display: block; }
.btnrow { display: flex; gap: 8px; }
.dbtn {
  width: 72px; height: 24px; padding: 2px 0 0; background: #efefef; color: #a8a8a8; font: 10px "Liberation Mono", monospace;
  border: 0; border-right: 2px solid #777; border-bottom: 2px solid #777; border-top: 1px solid #f8f8f8; border-left: 1px solid #f8f8f8;
}
.cursor { position: absolute; left: 329px; top: 41px; }

.status {
  height: 28px; flex: none; display: flex; align-items: center; background: #efefef; font-size: 11px; color: #333;
}
.player { margin-left: 10px; display: flex; height: 18px; border: 1px solid #111; width: 157px; }
.pbtn { flex: 1; display: flex; align-items: center; justify-content: center; background: #f6f6f6; border-right: 1px solid #333; }
.pbtn:last-child { border-right: 0; }
.messages { margin-left: 7px; width: 99px; height: 22px; display: flex; align-items: center; gap: 9px; border-top: 1px solid #ddd; border-right: 1px solid #ccc; color: #333; }
.messages span { font-size: 11px; letter-spacing: -0.1px; }
.state {
  margin-left: 10px; width: 855px; height: 21px; border: 1px solid #d4d4d4; border-left-color: #aaa; border-top-color: #bbb;
  padding-left: 3px; line-height: 20px; font-size: 11px; letter-spacing: -0.12px; color: #555;
}
.coords {
  margin-left: 10px; width: 126px; height: 21px; border-top: 1px solid #bbb; border-left: 1px solid #aaa;
  display: flex; align-items: center; font-size: 11.500px; color: #555; position: relative;
}
.cx { margin-left: 28px; width: 41px; }
.cy { width: 47px; }

.taskbar {
  height: 30px; flex: none; display: flex; align-items: center; color: #dbe4ea; position: relative;
  background: linear-gradient(#3a6072 0, #234a5c 35%, #123040 70%, #0e2836 100%);
}
.orb { position: absolute; left: 12px; top: -3px; }
.quick { margin-left: 68px; display: flex; gap: 5.400px; width: 187px; }
.qi { display: flex; }
.tasks { display: flex; gap: 4px; }
.task {
  width: 151px; height: 26px; display: flex; align-items: center; gap: 5px; padding-left: 6px;
  border: 1px solid #5a7c8c; border-radius: 2px; background: linear-gradient(#3e6678, #143242);
  font: 10.500px "DejaVu Sans", "Noto Sans CJK SC", sans-serif; white-space: nowrap; letter-spacing: -0.3px;
}
.task.active { padding-left: 8px; gap: 4px; background: #0e1d2a; border-color: #30424e; }
.task.cjk { font: 12px "Noto Sans CJK SC", sans-serif; letter-spacing: 0; gap: 6px; }
.docs { margin-left: 13px; color: #9ae8a0; font: 12px "Noto Sans CJK SC", sans-serif; }
.more { margin: -10px 0 0 12px; font: bold 12px "Liberation Sans", sans-serif; color: #e8f0f4; }
.tray { margin-left: 78px; display: flex; align-items: center; gap: 3px; }
.clock {
  margin-left: 9px; width: 28px; height: 28px; margin-top: 2px; background: #a41c2c; color: #f0b0b8;
  display: flex; flex-direction: column; align-items: center; font: 8px/9px "Noto Sans CJK SC", sans-serif; overflow: hidden;
}
</style>
